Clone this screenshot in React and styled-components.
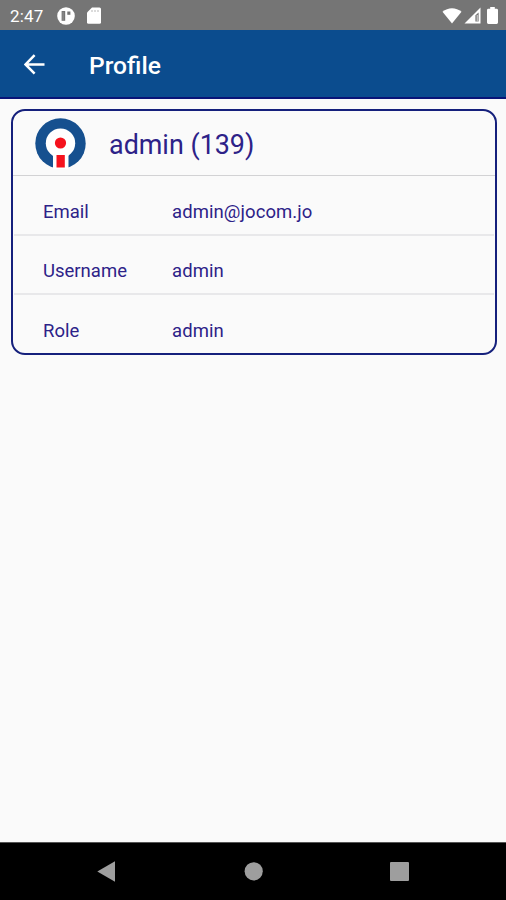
import React from 'react';
import styled, { createGlobalStyle } from 'styled-components';

const GlobalStyle = createGlobalStyle`
  * {
    box-sizing: border-box;
  }

  body {
    margin: 0;
    background: #fafafa;
    font-family: Roboto, 'Liberation Sans', sans-serif;
  }

  svg {
    display: block;
    flex: none;
  }
`;

const Screen = styled.div`
  display: flex;
  flex-direction: column;
  height: 100vh;
  background: #fafafa;
`;

const StatusBar = styled.div`
  display: flex;
  align-items: center;
  height: 30px;
  padding: 1px 8px 0 10px;
  background: #757575;
  color: #fff;
`;

const Clock = styled.span`
  width: 47px;
  font-size: 17px;
  line-height: 20px;
  letter-spacing: 0.2px;
`;

const StatusIcons = styled.div`
  display: flex;
  align-items: center;
  gap: ${p => p.$gap};
  margin-left: ${p => (p.$end ? 'auto' : 0)};
`;

const AppBar = styled.header`
  display: flex;
  align-items: center;
  height: 69px;
  padding: 1px 0 0 24px;
  background: #0b4c8e;
  border-bottom: 2px solid #0a1478;
`;

const BackButton = styled.button`
  display: flex;
  width: 65px;
  padding: 0;
  background: none;
  border: 0;
  cursor: pointer;
`;

const Title = styled.h1`
  margin: 3px 0 0;
  color: #fff;
  font-size: 24.6px;
  font-weight: 500;
  line-height: 32px;
`;

const Content = styled.main`
  flex: 1;
  padding: 10px 9px 0 11px;
`;

const Card = styled.section`
  height: 246px;
  border: 2px solid #15207c;
  border-radius: 14px;
  color: #2d2288;
`;

const CardHeader = styled.div`
  display: flex;
  align-items: center;
  height: 65px;
  padding-left: 22px;
  border-bottom: 1px solid #d2d2d4;
`;

const Name = styled.h2`
  margin: 4px 0 0 23px;
  font-size: 26.9px;
  font-weight: 400;
  line-height: 32px;
`;

const Row = styled.div`
  display: flex;
  height: ${p => p.$height || '59px'};
  margin: 0 1px;
  padding: ${p => p.$top || '23px'} 0 0 29px;
  font-size: 18.5px;
  line-height: 26px;
  border-bottom: ${p => (p.$last ? 'none' : '2px solid #e8e8ea')};
`;

const Label = styled.span`
  width: 129px;
`;

const Value = styled.span`
  letter-spacing: 0.08px;
`;

const NavBar = styled.nav`
  display: flex;
  align-items: center;
  justify-content: space-between;
  height: 58px;
  padding: 0 97px;
  background: #000;
  border-top: 1px solid #555;
`;

const WifiIcon = () => (
  <svg width="20" height="16" viewBox="0 0 20 16" fill="#fff">
    <path d="M0.5 3.8C6 -1 14 -1 19.5 3.8L10 15.5Z" />
  </svg>
);

const SignalIcon = () => (
  <svg width="17" height="17" viewBox="0 0 17 17">
    <path d="M0.5 16.5L16.5 0.5V16.5Z" fill="#fff" />
    <path d="M11.4 8.2L14.6 5.4V14.6H11.4Z" fill="#757575" />
    <path d="M13.2 8V14.5" stroke="#e0e0e0" strokeWidth="1" />
  </svg>
);

const BatteryIcon = () => (
  <svg width="11" height="17" viewBox="0 0 11 17" fill="#fff">
    <path d="M3.2 0H7.8V1.8H9.6Q11 1.8 11 3.2V15.6Q11 17 9.6 17H1.4Q0 17 0 15.6V3.2Q0 1.8 1.4 1.8H3.2Z" />
  </svg>
);

const NotificationIcon = () => (
  <svg width="18" height="18" viewBox="0 0 18 18">
    <circle cx="9" cy="9" r="8.8" fill="#fff" />
    <path d="M4.6 4H8.2V13.8H4.6Z" fill="#757575" />
    <path d="M6.1 5V13" stroke="#999" strokeWidth="0.8" />
    <path d="M10.3 4.5H13.4V7.8H10.3Z" fill="#757575" />
  </svg>
);

const SdCardIcon = () => (
  <svg width="14" height="17" viewBox="0 0 14 17">
    <path d="M5 0.5H12.5Q14 0.5 14 2V15.2Q14 16.7 12.5 16.7H1.5Q0 16.7 0 15.2V5.5Z" fill="#fff" />
    <path d="M5 3V5M8 3V5M11 3V5" stroke="#c4c4c4" strokeWidth="1.2" />
  </svg>
);

const BackArrow = () => (
  <svg width="21" height="21" viewBox="0 0 21 21" fill="none" stroke="#fff" strokeWidth="2.5">
    <path d="M20.5 10.5H2.2M10.6 1.2L1.6 10.5L10.6 19.6" />
  </svg>
);

const Logo = () => (
  <svg width="51" height="51" viewBox="0 0 51 51">
    <circle cx="25.5" cy="25.5" r="25.2" fill="#16508f" />
    <circle cx="25.5" cy="25.2" r="14.7" fill="#fff" />
    <path d="M18 34H33.5V51H18Z" fill="#fff" />
    <circle cx="25.5" cy="25" r="5.6" fill="#f5121d" />
    <path d="M21.5 37H29.8V49.5H21.5Z" fill="#f5121d" />
  </svg>
);

const details = [
  { label: 'Email', value: 'admin@jocom.jo', height: '60px' },
  { label: 'Username', value: 'admin', top: '22px' },
  { label: 'Role', value: 'admin' },
];

export default function App() {
  return (
    <Screen>
      <GlobalStyle />
      <StatusBar>
        <Clock>2:47</Clock>
        <StatusIcons $gap="12px">
          <NotificationIcon />
          <SdCardIcon />
        </StatusIcons>
        <StatusIcons $gap="6px" $end>
          <StatusIcons $gap="2px">
            <WifiIcon />
            <SignalIcon />
          </StatusIcons>
          <BatteryIcon />
        </StatusIcons>
      </StatusBar>

      <AppBar>
        <BackButton aria-label="Back">
          <BackArrow />
        </BackButton>
        <Title>Profile</Title>
      </AppBar>

      <Content>
        <Card>
          <CardHeader>
            <Logo />
            <Name>admin (139)</Name>
          </CardHeader>
          {details.map((item, i) => (
            <Row
              key={item.label}
              $height={item.height}
              $top={item.top}
              $last={i === details.length - 1}
            >
              <Label>{item.label}</Label>
              <Value>{item.value}</Value>
            </Row>
          ))}
        </Card>
      </Content>

      <NavBar>
        <svg width="18" height="21" viewBox="0 0 18 21" fill="#9e9e9e">
          <path d="M18 0.3V20.7L0.3 10.5Z" />
        </svg>
        <svg width="20" height="19" viewBox="0 0 20 19" fill="#9e9e9e">
          <circle cx="10.7" cy="9.3" r="9.1" />
        </svg>
        <svg width="19" height="19" viewBox="0 0 19 19" fill="#9e9e9e">
          <rect width="19" height="19" rx="1" />
        </svg>
      </NavBar>
    </Screen>
  );
}
